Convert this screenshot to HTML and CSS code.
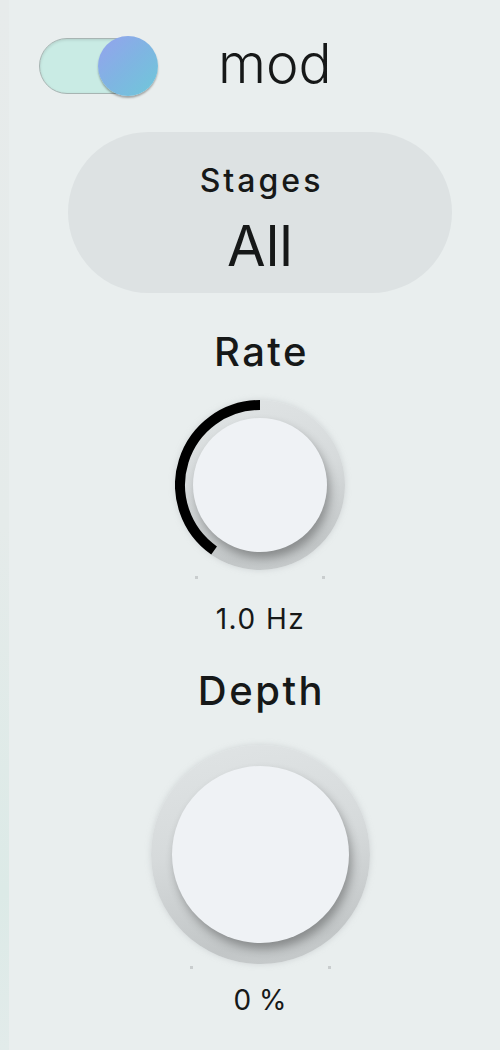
FILE: index.html
```html
<!DOCTYPE html>
<html lang="en">
<head>
    <meta charset="UTF-8">
    <meta name="viewport" content="width=device-width, initial-scale=1.0">
    <title>mod</title>
    <link rel="stylesheet" href="styles.css">
</head>
<body>
    <div class="frame">
        <div class="edge"></div>

        <div class="panel">
            <!-- on/off + module name -->
            <div class="top-row">
                <div class="toggle">
                    <div class="toggle-track"></div>
                    <div class="toggle-knob"></div>
                </div>
                <div class="module-name">mod</div>
            </div>

            <!-- stage selector -->
            <div class="stages">
                <div class="stages-label">Stages</div>
                <div class="stages-value">All</div>
            </div>

            <!-- rate -->
            <div class="param-label rate-label">Rate</div>
            <div class="knob knob-small">
                <div class="knob-cap"></div>
                <svg class="knob-arc" width="170" height="170" viewBox="0 0 170 170">
                    <path d="M 39.1 150.5 A 80 80 0 0 1 85 5" fill="none" stroke="#000" stroke-width="10"/>
                </svg>
            </div>
            <div class="ticks ticks-small"><span></span><span></span></div>
            <div class="param-value rate-value">1.0 Hz</div>

            <!-- depth -->
            <div class="param-label depth-label">Depth</div>
            <div class="knob knob-large">
                <div class="knob-cap"></div>
            </div>
            <div class="ticks ticks-large"><span></span><span></span></div>
            <div class="param-value depth-value">0 %</div>
        </div>
    </div>
</body>
</html>
```

FILE: styles.css
```css
body {
    margin: 0;
    padding: 0;
    background-color: #e9eeee;
    font-family: Inter, "Noto Sans", sans-serif;
    color: #161818;
}
.frame {
    display: flex;
    min-height: 1050px;
}
.edge {
    width: 9px;
    background: linear-gradient(180deg, #e7ebeb 0%, #e5ebea 50%, #dceae7 85%, #e2ebea 100%);
}
.panel {
    flex: 1;
    padding-left: 11px;
    display: flex;
    flex-direction: column;
    align-items: center;
}

/* top row */
.top-row {
    align-self: stretch;
    display: flex;
    align-items: center;
    margin-top: 36px;
    height: 60px;
    padding-left: 19px;
}
.toggle {
    position: relative;
    width: 119px;
    height: 60px;
}
.toggle-track {
    margin-top: 2px;
    width: 110px;
    height: 54px;
    border-radius: 28px;
    background-color: #c9ebe4;
    border: 1px solid #a7b4b2;
    box-shadow: inset 0 1px 3px rgba(0, 0, 0, 0.12);
}
.toggle-knob {
    position: absolute;
    top: 0;
    right: 0;
    width: 60px;
    height: 60px;
    border-radius: 50%;
    background: linear-gradient(135deg, #95a2ee 0%, #7fb5e2 50%, #6fc8d9 100%);
    box-shadow: 0 2px 2px rgba(0, 0, 0, 0.3);
}
.module-name {
    margin-left: 60px;
    font-size: 55px;
    font-weight: 300;
    line-height: 60px;
    padding-bottom: 6px;
}

/* stages pill */
.stages {
    margin-top: 36px;
    width: 384px;
    height: 161px;
    box-sizing: border-box;
    padding-top: 31px;
    border-radius: 81px;
    background-color: #dde2e3;
    display: flex;
    flex-direction: column;
    align-items: center;
}
.stages-label {
    font-size: 32px;
    font-weight: 500;
    line-height: 36px;
    letter-spacing: 3px;
    padding-left: 3px;
}
.stages-value {
    margin-top: 19px;
    font-size: 56px;
    font-weight: 400;
    line-height: 56px;
}

/* parameter labels and values */
.param-label {
    font-size: 40px;
    font-weight: 500;
    line-height: 44px;
    letter-spacing: 2.5px;
    padding-left: 3px;
}
.rate-label { margin-top: 37px; }
.depth-label { margin-top: 35px; }
.param-value {
    font-size: 28px;
    line-height: 30px;
}
.rate-value {
    margin-top: 25px;
    letter-spacing: 1.5px;
    padding-left: 1px;
}
.depth-value { margin-top: 16px; }

/* knobs */
.knob {
    position: relative;
    border-radius: 50%;
    background: linear-gradient(170deg, #e0e4e5 0%, #d6dadb 45%, #c2c6c7 85%, #c8cccd 100%);
    box-shadow: 0 0 5px 1px rgba(200, 205, 206, 0.6);
    display: flex;
    align-items: center;
    justify-content: center;
}
.knob-small {
    margin-top: 26px;
    width: 170px;
    height: 170px;
}
.knob-large {
    margin-top: 32px;
    width: 219px;
    height: 219px;
}
.knob-arc {
    position: absolute;
    top: 0;
    left: 0;
}
.knob-cap {
    border-radius: 50%;
    background-color: #eff2f5;
    box-shadow: 3px 6px 10px rgba(0, 0, 0, 0.3);
}
.knob-small .knob-cap {
    width: 134px;
    height: 134px;
}
.knob-large .knob-cap {
    width: 177px;
    height: 177px;
}
.ticks {
    display: flex;
    justify-content: space-between;
    height: 3px;
}
.ticks span {
    width: 3px;
    height: 3px;
    background-color: #c9cdce;
}
.ticks-small {
    margin-top: 6px;
    width: 130px;
}
.ticks-large {
    margin-top: 2px;
    width: 141px;
}
```
